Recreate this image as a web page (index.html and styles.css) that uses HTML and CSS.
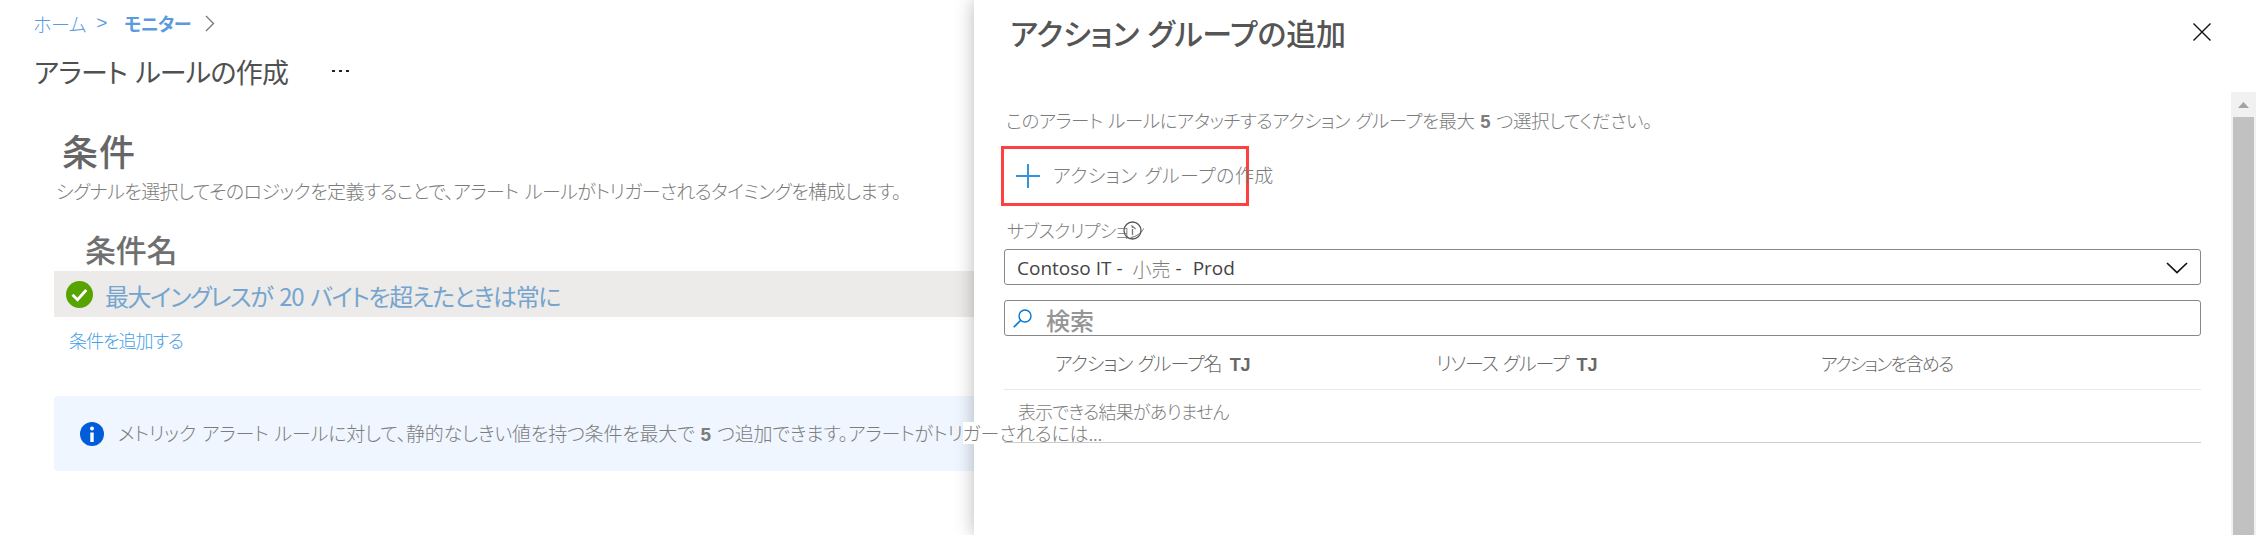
FILE: index.html
```html
<!DOCTYPE html>
<html lang="ja">
<head>
<meta charset="utf-8">
<title>アラート ルールの作成</title>
<link rel="stylesheet" href="styles.css">
</head>
<body>
<main class="page">
  <nav class="breadcrumb">
    <a class="crumb crumb-home">ホーム</a><span class="crumb-gt">&gt;</span><a class="crumb crumb-monitor">モニター</a>
    <svg class="crumb-chevron" width="10" height="17" viewBox="0 0 10 17"><path d="M1 1l7.500 7.500L1 16" fill="none" stroke="#777" stroke-width="1.300"/></svg>
  </nav>
  <header class="title-row">
    <h1 class="page-title">アラート ルールの作成</h1>
    <svg class="more" width="18" height="4" viewBox="0 0 18 4"><path d="M0 1h3v2H0zM7 1h3v2H7zM14 1h3v2h-3z" fill="#222"/></svg>
  </header>
  <h2 class="section-title">条件</h2>
  <p class="section-desc"><span class="t-desc">シグナルを選択してそのロジックを定義することで、アラート ルールがトリガーされるタイミングを構成します。</span></p>
  <h3 class="column-title"><span class="t-col">条件名</span></h3>
  <div class="condition-row">
    <svg class="ok-icon" width="27" height="27" viewBox="0 0 27 27"><circle cx="13.500" cy="13.500" r="13.500" fill="#57a300"/><path d="M6.500 13.800l5 5L20.300 9" fill="none" stroke="#fff" stroke-width="2.800"/></svg>
    <a class="condition-link">最大イングレスが 20 バイトを超えたときは常に</a>
  </div>
  <a class="add-condition"><span class="t-add">条件を追加する</span></a>
  <div class="notice">
    <svg class="info-icon" width="24" height="24" viewBox="0 0 24 24"><circle cx="12" cy="12" r="12" fill="#015cda"/><circle cx="12" cy="6.500" r="2" fill="#fff"/><path d="M10.300 10.500h3.400v9.500h-3.400z" fill="#fff"/></svg>
    <span class="notice-text"><span class="t-msg">メトリック アラート ルールに対して、静的なしきい値を持つ条件を最大で <b>5</b> つ追加できます。アラートがトリ<span class="patch">ガ</span>ーされるには...</span></span>
  </div>
</main>
<aside class="panel">
  <div class="panel-main">
    <header class="panel-header">
      <h2 class="panel-title">アクション グループの追加</h2>
      <svg class="close" width="18" height="18" viewBox="0 0 18 18"><path d="M.5.5l17 17M17.500.5L.5 17.500" stroke="#111" stroke-width="1.400"/></svg>
    </header>
    <p class="panel-desc"><span class="t-sub">このアラート ルールにアタッチするアクション グループを最大 <b>5</b> つ選択してください。</span></p>
    <button class="create">
      <svg class="plus" width="24" height="24" viewBox="0 0 24 24"><path d="M12 0v24M0 12h24" stroke="#0078d4" stroke-opacity=".8" stroke-width="2"/></svg>
      <span class="t-create">アクション グループの作成</span>
    </button>
    <div class="field-label"><span class="t-label">サブスクリプション</span>
      <svg class="label-info" width="19" height="19" viewBox="0 0 19 19"><circle cx="9.500" cy="9.500" r="8.500" fill="none" stroke="#555" stroke-width="1.300"/><path d="M9.500 5v2M9.500 8v6" stroke="#777" stroke-width="1.300"/></svg>
    </div>
    <div class="box select">
      <span class="latin t-contoso">Contoso IT -</span><span class="t-retail">小売</span><span class="latin t-dash">-</span><span class="latin t-prod">Prod</span>
      <svg class="select-chevron" width="22" height="12" viewBox="0 0 22 12"><path d="M1 1l10 9.500L21 1" fill="none" stroke="#111" stroke-width="1.700"/></svg>
    </div>
    <div class="box search">
      <svg class="search-icon" width="19" height="19" viewBox="0 0 19 19"><circle cx="12" cy="7" r="6" fill="none" stroke="#0078d4" stroke-width="1.400"/><path d="M7.700 11.300L.7 18.300" stroke="#0078d4" stroke-width="1.600"/></svg>
      <span class="t-search">検索</span>
    </div>
    <div class="table-head">
      <span class="th th-name"><span class="t-name">アクション グループ名</span><b>TJ</b></span>
      <span class="th th-rg"><span class="t-rg">リソース グループ</span><b>TJ</b></span>
      <span class="th th-act"><span class="t-act">アクションを含める</span></span>
    </div>
    <div class="empty"><span class="t-empty">表示できる結果がありません</span></div>
  </div>
  <div class="scrollbar">
    <svg width="11" height="6" viewBox="0 0 11 6"><path d="M0 6L5.500 0 11 6z" fill="#a3a3a3"/></svg>
    <div class="thumb"></div>
  </div>
</aside>
</body>
</html>
```
FILE: styles.css
```css
* { box-sizing: border-box; }
body {
  margin: 0;
  height: 535px;
  position: relative;
  overflow: hidden;
  background: #fff;
  color: #7c7c7c;
  font-family: "Noto Sans CJK JP", sans-serif;
  font-size: 19px;
  font-weight: 300;
  font-feature-settings: "palt";
  word-spacing: 2px;
}
h1, h2, h3, p { margin: 0; font-weight: inherit; }
span, a { white-space: nowrap; }
svg { flex: none; }
b { font-family: "Liberation Sans", Arial, sans-serif; font-weight: 700; letter-spacing: 0; }

.page { width: 974px; height: 535px; display: flex; flex-direction: column; }
.breadcrumb { display: flex; align-items: center; height: 26px; margin: 10px 0 0 33px; color: #5a9ade; }
.crumb-home { letter-spacing: -.4px; }
.crumb-gt { margin-left: 10px; font-family: "Liberation Sans", sans-serif; font-weight: 400; }
.crumb-monitor { margin-left: 17px; font-weight: 700; font-size: 18px; letter-spacing: -.5px; }
.crumb-chevron { margin-left: 14px; }
.title-row { display: flex; align-items: center; height: 34px; margin: 18px 0 0 34px; }
.page-title { width: 255px; font-size: 27px; font-weight: 400; color: #505050; white-space: nowrap; letter-spacing: -.7px; word-spacing: 3px; }
.more { margin-left: 43px; }
.section-title { margin: 40px 0 0 62px; height: 44px; line-height: 44px; font-size: 36px; font-weight: 500; color: #666; letter-spacing: 1px; }
.section-desc { margin: 5px 0 0 56px; height: 28px; line-height: 28px; }
.t-desc { letter-spacing: -.61px; word-spacing: 3px; }
.column-title { margin: 23px 0 0 85px; height: 42px; line-height: 42px; font-size: 31px; color: #707070; font-weight: 500; letter-spacing: -.2px; }
.condition-row { margin: 1px 0 0 54px; height: 46px; display: flex; align-items: center; padding-left: 12px; gap: 12px; background: #ecebe9; }
.condition-link { padding-top: 2px; font-size: 24px; color: #75a5cf; font-weight: 400; letter-spacing: -1.38px; word-spacing: 3px; }
.add-condition { margin: 10px 0 0 69px; height: 26px; line-height: 26px; font-size: 18px; color: #45a0e5; letter-spacing: -1px; }
.notice { margin: 43px 0 0 54px; height: 75px; display: flex; align-items: center; padding-left: 26px; gap: 14px; background: #eff6ff; border-radius: 4px 0 0 4px; }
.notice-text { position: relative; z-index: 2; padding-bottom: 2px; letter-spacing: -.2px; }
.patch { background: linear-gradient(#fff, #fff) center / 100% 22px no-repeat; }

.panel { position: absolute; z-index: 1; left: 974px; top: 0; right: 0; bottom: 0; display: flex; background: #fff; box-shadow: 0 0 18px rgba(0, 0, 0, .28); }
.panel-main { flex: 1; padding: 0 30px; }
.panel-header { display: flex; align-items: center; justify-content: space-between; height: 64px; padding-left: 6px; margin-right: -10px; }
.panel-title { font-size: 30px; color: #555; font-weight: 500; letter-spacing: -.2px; }
.panel-desc { height: 28px; line-height: 28px; margin: 42px 0 0 2px; }
.t-sub { font-size: 18.5px; letter-spacing: -.48px; }
.create { display: flex; align-items: center; gap: 13px; width: 248px; height: 60px; margin: 12px 0 0 -3px; padding: 0 0 0 12px; border: 3px solid #ff4040; background: none; font: inherit; color: inherit; font-feature-settings: inherit; word-spacing: 2px; letter-spacing: .45px; }
.t-create { padding-bottom: 3px; }
.field-label { display: flex; align-items: center; height: 28px; margin: 10px 0 0 3px; }
.t-label { font-size: 18px; letter-spacing: -.6px; }
.label-info { margin-left: -21px; }
.box { display: flex; align-items: center; height: 36px; border: 1px solid #888; border-radius: 3px; }
.select { margin-top: 5px; padding: 2px 12px 0; word-spacing: 0; }
.latin { font-family: "Open Sans", "Noto Sans", sans-serif; font-weight: 400; color: #444; }
.t-retail { margin-left: 10px; }
.t-dash { margin-left: 5px; }
.t-prod { margin-left: 11px; }
.select-chevron { margin-left: auto; }
.search { margin-top: 15px; padding-left: 8px; gap: 14px; }
.t-search { padding-top: 2px; font-size: 24px; color: #959595; font-weight: 500; }
.table-head { display: grid; grid-template-columns: 432px 385px 1fr; height: 54px; align-items: center; border-bottom: 1px solid #e8e8e8; color: #686868; }
.th-name { padding-left: 51px; letter-spacing: -1px; }
.th-rg { letter-spacing: -1.1px; }
.th-act { font-size: 18px; letter-spacing: -1.7px; }
.th b { margin-left: 8px; font-size: 18px; }
.empty { height: 53px; padding: 7px 0 0 14px; line-height: 28px; font-size: 18px; letter-spacing: -.75px; border-bottom: 1px solid #ccc; }

.scrollbar { width: 25px; margin-top: 92px; padding: 10px 2px 0; background: #f1f1f1; display: flex; flex-direction: column; align-items: center; }
.thumb { width: 21px; flex: 1; margin-top: 9px; background: #c1c1c1; }
```
